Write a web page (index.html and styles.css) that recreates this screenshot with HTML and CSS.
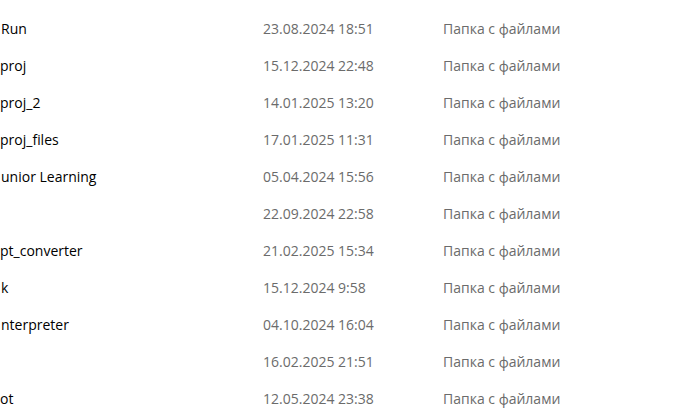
FILE: index.html
```html
<!DOCTYPE html>
<html lang="ru">
<head>
<meta charset="utf-8">
<title>Files</title>
<link rel="stylesheet" href="styles.css">
</head>
<body>
<div class="list">
  <div class="row"><span class="name">Run</span><span class="date">23.08.2024 18:51</span><span class="type">Папка с файлами</span></div>
  <div class="row"><span class="name cut">proj</span><span class="date">15.12.2024 22:48</span><span class="type">Папка с файлами</span></div>
  <div class="row"><span class="name cut">proj_2</span><span class="date">14.01.2025 13:20</span><span class="type">Папка с файлами</span></div>
  <div class="row"><span class="name cut">proj_files</span><span class="date">17.01.2025 11:31</span><span class="type">Папка с файлами</span></div>
  <div class="row"><span class="name">unior Learning</span><span class="date">05.04.2024 15:56</span><span class="type">Папка с файлами</span></div>
  <div class="row"><span class="name"></span><span class="date">22.09.2024 22:58</span><span class="type">Папка с файлами</span></div>
  <div class="row"><span class="name cut">pt_converter</span><span class="date">21.02.2025 15:34</span><span class="type">Папка с файлами</span></div>
  <div class="row"><span class="name">k</span><span class="date">15.12.2024 9:58</span><span class="type">Папка с файлами</span></div>
  <div class="row"><span class="name">nterpreter</span><span class="date">04.10.2024 16:04</span><span class="type">Папка с файлами</span></div>
  <div class="row"><span class="name"></span><span class="date">16.02.2025 21:51</span><span class="type">Папка с файлами</span></div>
  <div class="row"><span class="name cut">ot</span><span class="date">12.05.2024 23:38</span><span class="type">Папка с файлами</span></div>
</div>
</body>
</html>
```

FILE: styles.css
```css
html, body {
  margin: 0;
  padding: 0;
  background: #ffffff;
  overflow: hidden;
}
.list {
  display: flex;
  flex-direction: column;
  padding-top: 10px;
  font-family: "Open Sans", "Noto Sans", sans-serif;
  font-size: 14px;
}
.row {
  display: grid;
  grid-template-columns: 263px 180px 1fr;
  height: 37px;
  align-items: center;
  white-space: nowrap;
}
.name {
  color: #000000;
  padding-left: 1px;
  overflow: hidden;
}
.name.cut {
  padding-left: 0;
}
.date, .type {
  color: #6b6b6b;
}
```
